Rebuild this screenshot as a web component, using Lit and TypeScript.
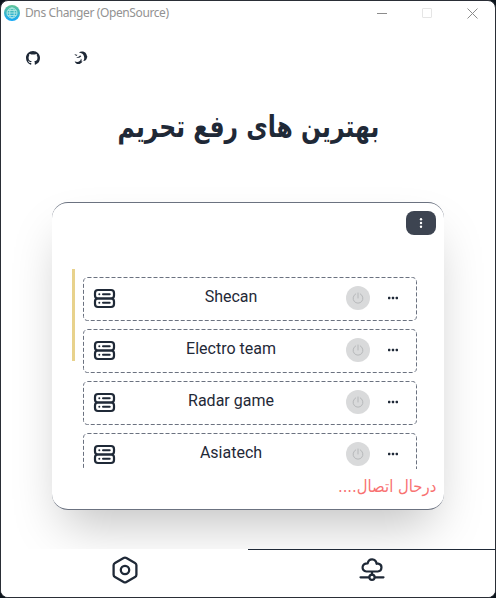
import { LitElement, html, css } from "lit";
import { customElement, property } from "lit/decorators.js";

const serverIcon = html`<svg width="24" height="24" viewBox="0 0 24 24" fill="none" stroke="#1f2937" stroke-width="2.200" stroke-linecap="round">
  <rect x="3" y="3" width="19" height="8.500" rx="3" /><rect x="3" y="11.500" width="19" height="8.500" rx="3" />
  <path d="M7.300 7.300h.01M7.300 15.800h.01M11 7.300h6.700M11 15.800h6.700" stroke-width="2" />
</svg>`;

@customElement("server-row")
export class ServerRow extends LitElement {
  @property() name = "";
  static styles = css`
    :host { display: flex; box-sizing: border-box; flex: none; height: 44px; position: relative; align-items: center; padding: 0 18px 0 9px; }
    .frame { position: absolute; inset: 0; width: 100%; height: 100%; }
    .icon { display: flex; height: 24px; margin-top: -1px; }
    .name { flex: 1; text-align: center; font-size: 16px; line-height: 24px; margin: -5px 0 0; color: #1f2937; }
    .power { width: 24px; height: 24px; border-radius: 50%; background: #d9dadb; display: flex; align-items: center; justify-content: center; margin-top: -2px; }
    .more { margin-left: 17px; margin-top: -2px; display: flex; }
  `;
  render() {
    return html`<svg class="frame" fill="none"><rect x=".5" y=".5" width="333" height="43" rx="4" stroke="#6b7280" stroke-dasharray="4 2" /></svg>
      <span class="icon">${serverIcon}</span>
      <span class="name">${this.name}</span>
      <span class="power"><svg width="12" height="12" viewBox="0 0 12 12" fill="none" stroke="#b6b8ba" stroke-linecap="round"><path d="M6 1v5M3.700 1.900a4.900 4.900 0 1 0 4.600 0" /></svg></span>
      <span class="more"><svg width="12" height="4" viewBox="0 0 12 4" fill="#1f2937"><rect x="1" y=".8" width="2.400" height="2.400" rx=".6" /><rect x="4.800" y=".8" width="2.400" height="2.400" rx=".6" /><rect x="8.600" y=".8" width="2.400" height="2.400" rx=".6" /></svg></span>`;
  }
}

@customElement("app-root")
export class AppRoot extends LitElement {
  servers = ["Shecan", "Electro team", "Radar game", "Asiatech"];
  static styles = css`
    :host { display: block; width: 496px; height: 598px; background: #0c141c; font-family: Roboto, "DejaVu Sans", sans-serif; color: #1f2937; }
    * { box-sizing: border-box; }
    .window { display: flex; flex-direction: column; height: 598px; border: 1px solid #2a2e36; border-radius: 8px; background: #fff; overflow: hidden; }
    .titlebar { display: flex; align-items: center; height: 24px; padding: 0 17.500px 0 3px; flex: none; font: 12px/24px "Noto Sans", sans-serif; color: #929292; }
    .titlebar .label { flex: 1; margin-left: 5px; white-space: nowrap; letter-spacing: -.39px; }
    .controls { display: flex; gap: 35px; }
    .links { display: flex; gap: 34px; padding: 26px 0 0 25px; height: 41px; flex: none; }
    h1 { margin: 39px 0 0; height: 44px; font: bold 30px/44px "DejaVu Sans", sans-serif; text-align: center; direction: rtl; flex: none; white-space: nowrap; }
    h1 span { display: inline-block; transform: scaleX(.782); }
    .card { margin: 53px 51px 0; height: 308px; flex: none; border: solid #6b7280; border-width: 1px 0; border-radius: 16px; background: #fff; box-shadow: 0 25px 50px -12px rgba(0, 0, 0, .25); display: flex; flex-direction: column; }
    .menu { align-self: flex-end; margin: 8px 8px 0 0; width: 30px; height: 24px; flex: none; border-radius: 8px; background: #3d4451; display: flex; align-items: center; justify-content: center; }
    .body { display: flex; gap: 8px; margin: 34px 27px 0 20px; height: 200px; flex: none; }
    .bar { width: 3px; height: 92px; background: #e8d28c; }
    .list { width: 334px; padding-top: 8px; display: flex; flex-direction: column; gap: 8px; overflow: hidden; }
    .status { direction: rtl; color: #f87171; font: 16.5px/24px "DejaVu Sans", sans-serif; margin: 6px 8px 0; white-space: nowrap; }
    .status span { display: inline-block; transform: scaleX(.9); transform-origin: right; }
    nav { margin-top: auto; height: 48px; flex: none; display: flex; background: #fff; }
    nav a { flex: 1; display: flex; justify-content: center; padding-top: 6px; border-top: 1px solid #fff; }
    nav a.active { border-color: #1f2937; padding-top: 7px; }
  `;
  render() {
    return html`<div class="window">
      <header class="titlebar">
        <svg width="16" height="16" viewBox="0 0 16 16" fill="none">
          <defs><linearGradient id="g" x1="0" y1="0" x2="0" y2="1"><stop stop-color="#61c596" /><stop offset="1" stop-color="#12a7f8" /></linearGradient></defs>
          <circle cx="8" cy="8" r="8" fill="url(#g)" />
          <g stroke="#b5ebe6" stroke-width=".9"><circle cx="8" cy="8" r="5" /><ellipse cx="8" cy="8" rx="2.300" ry="5" /><path d="M3 8h10M4 5.400h8M4 10.600h8" /></g>
        </svg>
        <span class="label">Dns Changer (OpenSource)</span>
        <span class="controls">
          <svg width="10" height="11" viewBox="0 0 10 11" stroke="#8c8c8c"><path d="M0 5.500h10" /></svg>
          <svg width="10" height="11" viewBox="0 0 10 11" fill="none" stroke="#e5e5e5"><rect x=".5" y=".5" width="9" height="9" rx=".5" /></svg>
          <svg width="11" height="11" viewBox="0 0 11 11" stroke="#8c8c8c"><path d="M.5 .5l10 10M10.500 .5l-10 10" /></svg>
        </span>
      </header>
      <div class="links">
        <svg width="14" height="14" viewBox="0 0 16 16" fill="#1f2937"><path d="M8 0C3.58 0 0 3.58 0 8c0 3.54 2.29 6.53 5.47 7.59.4.07.55-.17.55-.38 0-.19-.01-.82-.01-1.49-2.01.37-2.53-.49-2.69-.94-.09-.23-.48-.94-.82-1.13-.28-.15-.68-.52-.01-.53.63-.01 1.08.58 1.23.82.72 1.21 1.87.87 2.33.66.07-.52.28-.87.51-1.07-1.78-.2-3.64-.89-3.64-3.95 0-.87.31-1.59.82-2.15-.08-.2-.36-1.02.08-2.12 0 0 .67-.21 2.2.82.64-.18 1.32-.27 2-.27s1.36.09 2 .27c1.53-1.04 2.2-.82 2.2-.82.44 1.1.16 1.92.08 2.12.51.56.82 1.27.82 2.15 0 3.07-1.87 3.75-3.65 3.95.29.25.54.73.54 1.48 0 1.07-.01 1.93-.01 2.2 0 .21.15.46.55.38A8.01 8.01 0 0 0 16 8c0-4.42-3.58-8-8-8z" /></svg>
        <svg width="14" height="14" viewBox="0 0 14 14" fill="#1f2937"><path d="M4.800 1.300C7 0 10.500 .1 12 2.400c.9 1.300 .7 2.300 1.400 3.300-.6 .8-.4 1.900-1.300 3-1 1.200-1.900 1.200-2.800 1.300 .4-.8 1-1.900 .9-3.600C10.100 4.300 8.700 2.500 6.600 2zM.4 2.700c.9 .9 1.800 1 2.900 1.100L3 4.800C1.700 4.800 .7 3.900 .4 2.700zM2.200 5.900c1.400 .2 2.700-.2 3.800-1.500l1.300 .6c-1 1.800-3.500 2.400-5.100 .9zM.7 10.200c1.800 1.200 3.700 1 5-.2 .9-.8 1.200-1.700 1.200-2.600 1 1.100 .9 2.100 .4 3l1.200-.2c-.8 1.700-2.300 2.900-4.300 2.900-1.700 0-3-1.100-3.500-2.900z" /></svg>
      </div>
      <h1><span>بهترین های رفع تحریم</span></h1>
      <section class="card">
        <div class="menu"><svg width="4" height="12" viewBox="0 0 4 12" fill="#fff"><circle cx="2" cy="2.200" r="1.200" /><circle cx="2" cy="6" r="1.200" /><circle cx="2" cy="9.800" r="1.200" /></svg></div>
        <div class="body">
          <div class="bar"></div>
          <div class="list">${this.servers.map((s) => html`<server-row name=${s}></server-row>`)}</div>
        </div>
        <div class="status"><span>درحال اتصال....</span></div>
      </section>
      <nav>
        <a><svg width="30" height="30" viewBox="0 0 30 30" fill="none" stroke="#1f2937" stroke-width="2.300" stroke-linejoin="round"><path d="M13.600 2.100q1.400-.8 2.800 0l8.600 4.800q1.400 .8 1.400 2.400v9.400q0 1.600-1.400 2.400l-8.600 4.900q-1.400 .8-2.800 0L5 21.100q-1.400-.8-1.400-2.400V9.300q0-1.600 1.400-2.400z" /><circle cx="15" cy="14" r="4.200" /></svg></a>
        <a class="active"><svg width="26" height="26" viewBox="0 0 26 26" fill="none" stroke="#1f2937" stroke-width="2.200" stroke-linecap="round" stroke-linejoin="round"><path d="M7.400 14.500h11.400a4 4 0 0 0 .5-7.900q-.9-.2-1.700 .2C16.800 1 9.700 1 8.700 6.300 2.200 6.200 2 14 7.400 14.500zM13 14.500v3.200M1.500 20.300h8.500M16 20.300h8.500" /><circle cx="13" cy="20.300" r="2.600" /></svg></a>
      </nav>
    </div>`;
  }
}
